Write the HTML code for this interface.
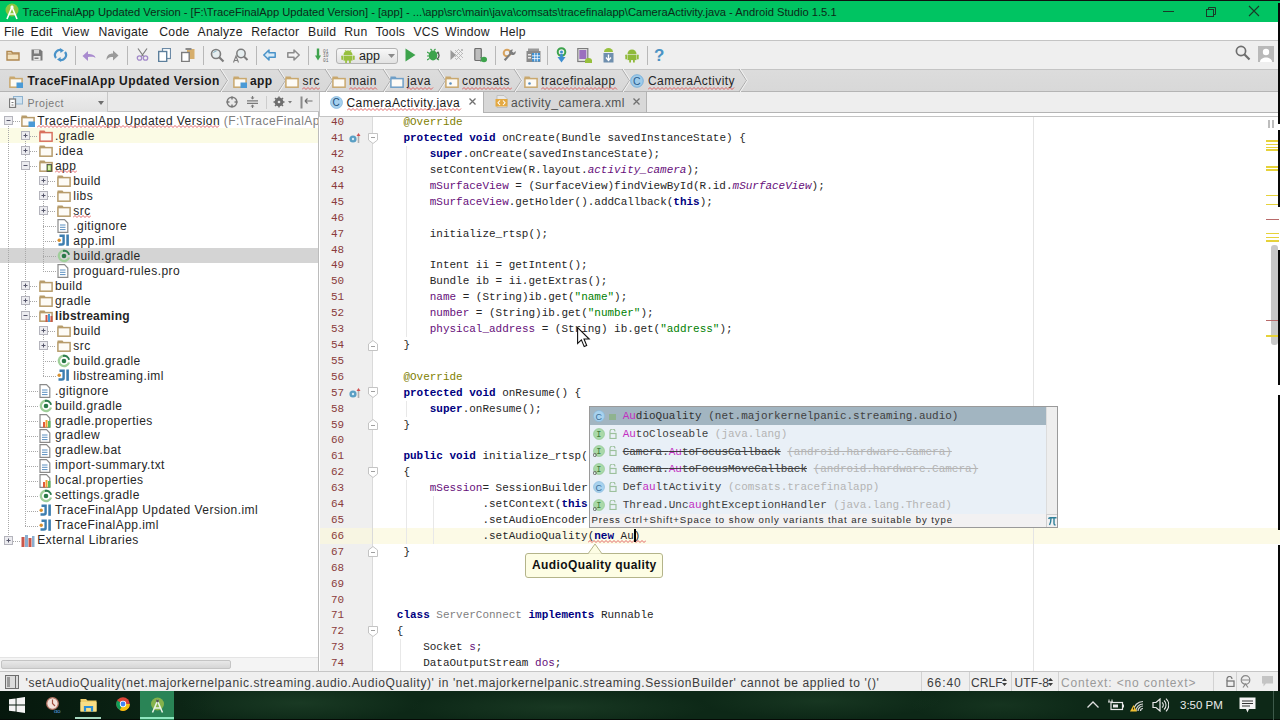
<!DOCTYPE html>
<html><head><meta charset="utf-8">
<style>
*{box-sizing:border-box}
html,body{margin:0;padding:0}
body{width:1280px;height:720px;overflow:hidden;position:relative;background:#fff;font-family:"Liberation Sans",sans-serif;color:#000}
.a{position:absolute}
.t{position:absolute;white-space:pre;line-height:1}
#title{left:0;top:0;width:1280px;height:22px;background:#00c462;border-top:1px solid #111}
#menu{left:0;top:22px;width:1280px;height:18.5px;background:#fff;border-bottom:1px solid #c4c4c4}
#tool{left:0;top:40.5px;width:1280px;height:29px;background:#efefef;border-bottom:1px solid #bdbdbd}
#crumb{left:0;top:69.3px;width:1280px;height:22.7px;background:linear-gradient(#dcdcdc,#d8d8d8);border-bottom:1px solid #b4b4b4;border-top:1px solid #c4c4c4}
#phead{left:0;top:92px;width:319px;height:20px;background:#eaeaea;border-bottom:1px solid #c4c4c4}
#tabs{left:319px;top:92px;width:961px;height:24px;background:#fff}
#tree{left:0;top:112px;width:319px;height:560px;background:#fff;border-right:1px solid #bcbcbc}
#editor{left:320px;top:116px;width:960px;height:556px;background:#fff;overflow:hidden}
#gutter{left:0;top:0;width:52.5px;height:556px;background:#f0f0f0;border-right:1px solid #dcdcdc}
#status{left:0;top:671px;width:1280px;height:20px;background:#efefef;border-top:1px solid #c6c6c6}
#task{left:0;top:691px;width:1280px;height:29px;background:linear-gradient(90deg,rgba(0,10,4,.55),rgba(0,10,4,0) 220px),radial-gradient(ellipse 120px 20px at 300px 12px,rgba(70,120,80,.22),transparent),radial-gradient(ellipse 150px 18px at 560px 16px,rgba(70,120,80,.2),transparent),radial-gradient(ellipse 120px 18px at 820px 10px,rgba(70,120,80,.18),transparent),radial-gradient(ellipse 90px 18px at 1000px 14px,rgba(70,120,80,.15),transparent),#0d2817;border-bottom:1.5px solid #050a06}
.code{font-family:"Liberation Mono",monospace;font-size:10.981px;line-height:15.9px;white-space:pre}
.ln{font-family:"Liberation Mono",monospace;font-size:10.981px;line-height:15.9px;color:#8a3b3b;white-space:pre}
.kw{color:#000080;font-weight:bold}
.an{color:#808000}
.fl{color:#660e7a}
.st{color:#008000}
.sf{color:#660e7a;font-style:italic}
.gr{color:#808080}
.hl{color:#c22fc2}
.tr{font-size:12px;letter-spacing:0.45px;color:#000}
</style></head><body>
<div id="title" class="a">
<svg class="a" style="left:4px;top:2px" width="16" height="17" viewBox="0 0 16 17"><circle cx="8" cy="7" r="6.5" fill="#a4c639" opacity=".85"/><path d="M3 16 L8 4 L13 16" stroke="#fff" stroke-width="1.6" fill="none"/><path d="M5 11 H11" stroke="#fff" stroke-width="1.3"/><circle cx="8" cy="4" r="1.6" fill="#fff"/></svg>
<div class="t" style="left:22.5px;top:5.50px;font-size:11.2px;color:#0c2a18">TraceFinalApp Updated Version - [F:\TraceFinalApp Updated Version] - [app] - ...\app\src\main\java\comsats\tracefinalapp\CameraActivity.java - Android Studio 1.5.1</div>
<div class="a" style="left:1163px;top:10px;width:11px;height:1px;background:#1a3a28"></div>
<svg class="a" style="left:1205px;top:5px" width="12" height="12" viewBox="0 0 12 12"><rect x="1.5" y="3.5" width="7" height="7" fill="none" stroke="#1a3a28"/><path d="M3.5 3.5 V1.5 H10.5 V8.5 H8.5" fill="none" stroke="#1a3a28"/></svg>
<svg class="a" style="left:1248px;top:4px" width="12" height="12" viewBox="0 0 12 12"><path d="M1 1 L11 11 M11 1 L1 11" stroke="#1a3a28" stroke-width="1.1"/></svg>
</div>
<div id="menu" class="a"><div class="t" style="left:3.9px;top:3.80px;font-size:12.2px;letter-spacing:0.25px;color:#1e1e1e">File</div><div class="t" style="left:30.6px;top:3.80px;font-size:12.2px;letter-spacing:0.25px;color:#1e1e1e">Edit</div><div class="t" style="left:62px;top:3.80px;font-size:12.2px;letter-spacing:0.25px;color:#1e1e1e">View</div><div class="t" style="left:98.5px;top:3.80px;font-size:12.2px;letter-spacing:0.25px;color:#1e1e1e">Navigate</div><div class="t" style="left:159.3px;top:3.80px;font-size:12.2px;letter-spacing:0.25px;color:#1e1e1e">Code</div><div class="t" style="left:197.6px;top:3.80px;font-size:12.2px;letter-spacing:0.25px;color:#1e1e1e">Analyze</div><div class="t" style="left:251.2px;top:3.80px;font-size:12.2px;letter-spacing:0.25px;color:#1e1e1e">Refactor</div><div class="t" style="left:308px;top:3.80px;font-size:12.2px;letter-spacing:0.25px;color:#1e1e1e">Build</div><div class="t" style="left:344.3px;top:3.80px;font-size:12.2px;letter-spacing:0.25px;color:#1e1e1e">Run</div><div class="t" style="left:375.5px;top:3.80px;font-size:12.2px;letter-spacing:0.25px;color:#1e1e1e">Tools</div><div class="t" style="left:413.4px;top:3.80px;font-size:12.2px;letter-spacing:0.25px;color:#1e1e1e">VCS</div><div class="t" style="left:445px;top:3.80px;font-size:12.2px;letter-spacing:0.25px;color:#1e1e1e">Window</div><div class="t" style="left:499.7px;top:3.80px;font-size:12.2px;letter-spacing:0.25px;color:#1e1e1e">Help</div></div>
<div id="tool" class="a"></div>
<svg class="a" style="left:6px;top:49px" width="14" height="12" viewBox="0 0 14 12"><path d="M1 2.5 H5.5 L6.5 4 H13 V11 H1 Z" fill="#f3e3c1" stroke="#b08850" stroke-width="1.4"/><path d="M1 5 H13" stroke="#b08850" stroke-width="1"/></svg>
<svg class="a" style="left:31px;top:49px" width="12" height="12" viewBox="0 0 12 12"><path d="M0.5 0.5 H9.5 L11.5 2.5 V11.5 H0.5 Z" fill="#7a7a7a"/><rect x="3" y="1" width="5" height="3.5" fill="#d8d8d8"/><rect x="2.5" y="7" width="7" height="4.5" fill="#e8e8e8"/><rect x="3.5" y="8.5" width="4" height="1.5" fill="#7a7a7a"/></svg>
<svg class="a" style="left:53px;top:48px" width="15" height="14" viewBox="0 0 15 14"><path d="M3 10 A5 5 0 0 1 8.5 2.2" fill="none" stroke="#4a93c9" stroke-width="2.2"/><path d="M12 4 A5 5 0 0 1 6.5 11.8" fill="none" stroke="#4a93c9" stroke-width="2.2"/><path d="M7 0 L11 2.5 L7.5 5 Z" fill="#4a93c9"/><path d="M8 14 L4 11.5 L7.5 9 Z" fill="#4a93c9"/></svg>
<div class="a" style="left:75px;top:46px;width:1px;height:19px;background:#b8b8b8"></div>
<svg class="a" style="left:82px;top:50px" width="14" height="12" viewBox="0 0 14 12"><path d="M0.5 6 L6 1 V4 C10 4 13 5 13.5 8 C12 6.5 9.5 6.5 6 7 V11 Z" fill="#a98bcf"/></svg>
<svg class="a" style="left:106px;top:50px" width="13" height="11" viewBox="0 0 13 11"><path d="M12.5 5.5 L7 0.5 V3.5 C3 3.5 0.5 5.5 0.5 10 C2 7.5 4 7 7 7 V10.5 Z" fill="#9a9a9a"/></svg>
<div class="a" style="left:127px;top:46px;width:1px;height:19px;background:#b8b8b8"></div>
<svg class="a" style="left:136px;top:48px" width="13" height="13" viewBox="0 0 13 13"><path d="M2 0.5 L8 9 M11 0.5 L5 9" stroke="#7d7d7d" stroke-width="1.2"/><circle cx="3.5" cy="10" r="2.2" fill="none" stroke="#a38ac9" stroke-width="1.3"/><circle cx="9.5" cy="10" r="2.2" fill="none" stroke="#a38ac9" stroke-width="1.3"/></svg>
<svg class="a" style="left:158px;top:48px" width="13" height="14" viewBox="0 0 13 14"><rect x="4.5" y="0.5" width="8" height="10" fill="#fff" stroke="#6c8aa6" stroke-width="1.2"/><rect x="0.7" y="3.5" width="8" height="10" fill="#fff" stroke="#5c7f9c" stroke-width="1.4"/></svg>
<svg class="a" style="left:181px;top:48px" width="14" height="14" viewBox="0 0 14 14"><rect x="6" y="1" width="7.5" height="10" fill="#d6ae6c"/><rect x="4.5" y="0" width="6" height="2" fill="#8a8a8a"/><rect x="0.7" y="4.5" width="7.5" height="9" fill="#fff" stroke="#7d7d7d" stroke-width="1.4"/></svg>
<div class="a" style="left:203px;top:46px;width:1px;height:19px;background:#b8b8b8"></div>
<svg class="a" style="left:210px;top:48px" width="15" height="15" viewBox="0 0 15 15"><circle cx="6" cy="6" r="4.5" fill="#e6eef0" stroke="#7d7d7d" stroke-width="1.6"/><path d="M9 9 L13.5 13.5" stroke="#7d7d7d" stroke-width="2.2"/><path d="M3.5 5 A3 3 0 0 1 6.5 3" stroke="#7fb0c0" stroke-width="1" fill="none"/></svg>
<svg class="a" style="left:233px;top:48px" width="16" height="15" viewBox="0 0 16 15"><circle cx="8" cy="5.5" r="4.2" fill="#e6eef0" stroke="#7d7d7d" stroke-width="1.5"/><path d="M11 8.5 L14.5 12" stroke="#7d7d7d" stroke-width="2"/><path d="M0.5 14.5 L3 8 L5.5 14.5 M1.5 12.5 H4.5" stroke="#7d7d7d" stroke-width="1.1" fill="none"/></svg>
<div class="a" style="left:256px;top:46px;width:1px;height:19px;background:#b8b8b8"></div>
<svg class="a" style="left:263px;top:49px" width="13" height="12" viewBox="0 0 13 12"><path d="M0.8 6 L6 1 V3.8 H12.2 V8.2 H6 V11 Z" fill="#d9ebf7" stroke="#4a93c9" stroke-width="1.5" stroke-linejoin="round"/></svg>
<svg class="a" style="left:287px;top:49px" width="13" height="12" viewBox="0 0 13 12"><path d="M12.2 6 L7 1 V3.8 H0.8 V8.2 H7 V11 Z" fill="#f4f4f4" stroke="#8c8c8c" stroke-width="1.5" stroke-linejoin="round"/></svg>
<div class="a" style="left:308px;top:46px;width:1px;height:19px;background:#b8b8b8"></div>
<svg class="a" style="left:315px;top:48px" width="15" height="15" viewBox="0 0 15 15"><path d="M3 0.5 V9" stroke="#3fa34d" stroke-width="2.4"/><path d="M0 7.5 L3 12.5 L6 7.5 Z" fill="#3fa34d"/><text x="8" y="4.5" font-size="4.6" fill="#6a6a6a" font-family="Liberation Mono">01</text><text x="8" y="9" font-size="4.6" fill="#6a6a6a" font-family="Liberation Mono">10</text><text x="8" y="13.5" font-size="4.6" fill="#6a6a6a" font-family="Liberation Mono">01</text></svg>
<div class="a" style="left:336px;top:47.5px;width:62px;height:16.5px;border:1px solid #b3b3b3;border-radius:3px;background:linear-gradient(#f8f8f8,#e2e2e2)"></div>
<svg class="a" style="left:341px;top:49px" width="14" height="14" viewBox="0 0 14 14"><path d="M2.5 6 A4.5 4.5 0 0 1 11.5 6 Z" fill="#97c03d"/><rect x="2.5" y="6.6" width="9" height="5" fill="#97c03d"/><rect x="0.3" y="6.5" width="1.7" height="4.5" rx=".8" fill="#97c03d"/><rect x="12" y="6.5" width="1.7" height="4.5" rx=".8" fill="#97c03d"/><rect x="4.2" y="11" width="1.7" height="3" fill="#97c03d"/><rect x="8.1" y="11" width="1.7" height="3" fill="#97c03d"/><path d="M4 1 L5 2.5 M10 1 L9 2.5" stroke="#97c03d" stroke-width=".8"/></svg>
<div class="t" style="left:359px;top:50.00px;font-size:12.5px;color:#222">app</div>
<svg class="a" style="left:388px;top:54px" width="7" height="4" viewBox="0 0 7 4"><path d="M0 0 H7 L3.5 4 Z" fill="#8a8a8a"/></svg>
<svg class="a" style="left:405px;top:48px" width="11" height="14" viewBox="0 0 11 14"><path d="M0.5 0.5 L10.5 7 L0.5 13.5 Z" fill="#3da34c"/></svg>
<svg class="a" style="left:427px;top:48px" width="14" height="14" viewBox="0 0 14 14"><ellipse cx="6" cy="7.5" rx="4.3" ry="5" fill="#3da34c"/><path d="M0 4 L2.5 5.5 M0 8 H2 M0 12 L2.5 10.5 M12 4 L9.5 5.5 M12 12 L9.5 10.5 M3.5 1 L5 2.5 M8.5 1 L7 2.5" stroke="#3da34c" stroke-width="1.2"/><path d="M10 4 A4 4 0 0 1 10 11" stroke="#555" stroke-width="1.3" fill="none"/></svg>
<svg class="a" style="left:450px;top:48px" width="14" height="14" viewBox="0 0 14 14"><path d="M0.5 2 L6 7 L0.5 12 Z" fill="#9a9a9a"/><path d="M5 2 L13 10 M8 1 L13 6 M5 6 L11 12 M5 10 L7 12 M11 1 L13 3 M13 1 L5 9 M13 5 L7 11 M9 1 L5 5" stroke="#b0b0b0" stroke-width=".8"/></svg>
<svg class="a" style="left:474px;top:48px" width="14" height="15" viewBox="0 0 14 15"><rect x="0.8" y="0.5" width="6.5" height="12" rx="1" fill="#bdbdbd" stroke="#6e6e6e" stroke-width="1.2"/><ellipse cx="10" cy="11.5" rx="3" ry="2.8" fill="#3da34c"/><path d="M6.5 9.5 L8 10.5 M6.5 13.5 L8 12.5" stroke="#3da34c" stroke-width="1"/></svg>
<div class="a" style="left:495px;top:46px;width:1px;height:19px;background:#b8b8b8"></div>
<svg class="a" style="left:502px;top:48px" width="15" height="15" viewBox="0 0 15 15"><circle cx="5" cy="5" r="3.3" fill="none" stroke="#d7a35f" stroke-width="2"/><path d="M13.5 3 A3 3 0 0 1 9 6.5 L3.5 13 L1.8 11.5 L7.5 5.5 A3 3 0 0 1 11 1.5 L10 3.5 L11.8 4.8 Z" fill="#7d7d7d"/></svg>
<svg class="a" style="left:526px;top:48px" width="15" height="15" viewBox="0 0 15 15"><rect x="2" y="0.5" width="11" height="3" fill="#9a9a9a"/><rect x="0.5" y="3" width="14" height="11" fill="#8a8a8a"/><rect x="6" y="5" width="8" height="8.5" fill="#3d8ed0"/><path d="M6 7.8 H14 M6 10.6 H14 M8.7 5 V13.5 M11.3 5 V13.5" stroke="#fff" stroke-width=".8"/><rect x="2" y="6" width="3" height="1.5" fill="#e8e8e8"/><rect x="2" y="9" width="3" height="1.5" fill="#e8e8e8"/></svg>
<div class="a" style="left:547px;top:46px;width:1px;height:19px;background:#b8b8b8"></div>
<svg class="a" style="left:556px;top:47px" width="11" height="16" viewBox="0 0 11 16"><circle cx="5.5" cy="5" r="3.8" fill="none" stroke="#3da34c" stroke-width="2"/><circle cx="5.5" cy="5" r="1.5" fill="#3d8ed0"/><path d="M5.5 7 V12" stroke="#3d8ed0" stroke-width="2.6"/><path d="M1.5 10 L5.5 15.5 L9.5 10 Z" fill="#3d8ed0"/></svg>
<svg class="a" style="left:577px;top:48px" width="16" height="15" viewBox="0 0 16 15"><rect x="0.8" y="0.5" width="10" height="13" fill="#e4e4e4" stroke="#7d7d7d" stroke-width="1.2"/><rect x="2.3" y="2" width="7" height="9" fill="#9b6fbf"/><path d="M8 13 A3.5 3 0 0 1 15 13 Z" fill="#97c03d"/><rect x="8" y="12" width="7" height="3" fill="#97c03d"/></svg>
<svg class="a" style="left:603px;top:48px" width="11" height="15" viewBox="0 0 11 15"><path d="M1 4 A4.5 4 0 0 1 10 4 Z" fill="#97c03d"/><rect x="0.5" y="5" width="10" height="9.5" fill="#6f8fae"/><path d="M5.5 6.5 V12 M3 9.5 L5.5 12.5 L8 9.5" stroke="#fff" stroke-width="1.3" fill="none"/></svg>
<svg class="a" style="left:625px;top:48px" width="14" height="15" viewBox="0 0 14 15"><path d="M2.5 6 A4.5 4.5 0 0 1 11.5 6 Z" fill="#8fba3a"/><rect x="2.5" y="6.6" width="9" height="5.5" fill="#8fba3a"/><rect x="0.3" y="6.5" width="1.7" height="5" rx=".8" fill="#8fba3a"/><rect x="12" y="6.5" width="1.7" height="5" rx=".8" fill="#8fba3a"/><rect x="4.2" y="11" width="1.8" height="3.5" fill="#8fba3a"/><rect x="8" y="11" width="1.8" height="3.5" fill="#8fba3a"/></svg>
<div class="a" style="left:647px;top:46px;width:1px;height:19px;background:#b8b8b8"></div>
<div class="t" style="left:654px;top:46.50px;font-size:17px;font-weight:bold;color:#4b93c4">?</div>
<svg class="a" style="left:1235px;top:45px" width="16" height="16" viewBox="0 0 16 16"><circle cx="6" cy="6" r="4.6" fill="none" stroke="#6e6e6e" stroke-width="1.7"/><path d="M9.3 9.3 L14.5 14.5" stroke="#6e6e6e" stroke-width="2.2"/></svg>
<svg class="a" style="left:1258px;top:46px" width="16" height="16" viewBox="0 0 16 16"><rect x="0" y="0" width="16" height="16" fill="#b9b9b9"/><circle cx="8" cy="6" r="3.2" fill="#fff"/><path d="M2 16 C2 10 14 10 14 16 Z" fill="#fff"/></svg>
<div id="crumb" class="a"></div>
<svg class="a" style="left:9px;top:75.5px" width="14" height="12" viewBox="0 0 14 12"><path d="M0.5 0.5 H5.5 L6.5 2 H0.5 Z" fill="#c9a86e"/><rect x="0.9" y="2.6" width="12.2" height="8.6" fill="#fdfbf6" stroke="#c9a86e" stroke-width="1.5"/><rect x="7.5" y="6.5" width="6.5" height="5.5" fill="#4a9ad6"/></svg>
<div class="t" style="left:27.5px;top:75.30px;font-size:12px;letter-spacing:0.4px;color:#1a1a1a;font-weight:bold">TraceFinalApp Updated Version</div>
<svg class="a" style="left:219px;top:69px" width="10" height="23" viewBox="0 0 10 23"><path d="M1 0 L8.5 11.5 L1 23" fill="none" stroke="#ababab" stroke-width="1"/><path d="M2.2 0 L9.5 11.5 L2.2 23" fill="none" stroke="#f2f2f2" stroke-width="1"/></svg>
<svg class="a" style="left:233px;top:75.5px" width="14" height="12" viewBox="0 0 14 12"><path d="M0.5 0.5 H5.5 L6.5 2 H0.5 Z" fill="#c9a86e"/><rect x="0.9" y="2.6" width="12.2" height="8.6" fill="#fdfbf6" stroke="#c9a86e" stroke-width="1.5"/><rect x="7.5" y="6.5" width="6.5" height="5.5" fill="#4a9ad6"/></svg>
<div class="t" style="left:250px;top:75.30px;font-size:12px;letter-spacing:0.4px;color:#1a1a1a;font-weight:bold">app</div>
<svg class="a" style="left:277px;top:69px" width="10" height="23" viewBox="0 0 10 23"><path d="M1 0 L8.5 11.5 L1 23" fill="none" stroke="#ababab" stroke-width="1"/><path d="M2.2 0 L9.5 11.5 L2.2 23" fill="none" stroke="#f2f2f2" stroke-width="1"/></svg>
<svg class="a" style="left:285px;top:75.5px" width="14" height="12" viewBox="0 0 14 12"><path d="M0.5 0.5 H5.5 L6.5 2 H0.5 Z" fill="#c9a86e"/><rect x="0.9" y="2.6" width="12.2" height="8.6" fill="#fdfbf6" stroke="#c9a86e" stroke-width="1.5"/></svg>
<div class="t" style="left:302.5px;top:75.30px;font-size:12px;letter-spacing:0.45px;color:#262626;">src</div>
<svg class="a" style="left:302.0px;top:86.5px" width="18" height="3" viewBox="0 0 18 3"><polyline points="0,2.5 2,0.5 4,2.5 6,0.5 8,2.5 10,0.5 12,2.5 14,0.5 16,2.5 18,0.5" fill="none" stroke="#e05858" stroke-width="0.9"/></svg>
<svg class="a" style="left:324px;top:69px" width="10" height="23" viewBox="0 0 10 23"><path d="M1 0 L8.5 11.5 L1 23" fill="none" stroke="#ababab" stroke-width="1"/><path d="M2.2 0 L9.5 11.5 L2.2 23" fill="none" stroke="#f2f2f2" stroke-width="1"/></svg>
<svg class="a" style="left:332px;top:75.5px" width="14" height="12" viewBox="0 0 14 12"><path d="M0.5 0.5 H5.5 L6.5 2 H0.5 Z" fill="#c9a86e"/><rect x="0.9" y="2.6" width="12.2" height="8.6" fill="#fdfbf6" stroke="#c9a86e" stroke-width="1.5"/></svg>
<div class="t" style="left:349px;top:75.30px;font-size:12px;letter-spacing:0.45px;color:#262626;">main</div>
<svg class="a" style="left:349.0px;top:86.5px" width="29" height="3" viewBox="0 0 29 3"><polyline points="0,2.5 2,0.5 4,2.5 6,0.5 8,2.5 10,0.5 12,2.5 14,0.5 16,2.5 18,0.5 20,2.5 22,0.5 24,2.5 26,0.5 28,2.5" fill="none" stroke="#e05858" stroke-width="0.9"/></svg>
<svg class="a" style="left:382px;top:69px" width="10" height="23" viewBox="0 0 10 23"><path d="M1 0 L8.5 11.5 L1 23" fill="none" stroke="#ababab" stroke-width="1"/><path d="M2.2 0 L9.5 11.5 L2.2 23" fill="none" stroke="#f2f2f2" stroke-width="1"/></svg>
<svg class="a" style="left:390px;top:75.5px" width="14" height="12" viewBox="0 0 14 12"><path d="M0.5 0.5 H5.5 L6.5 2 H0.5 Z" fill="#6f9fc7"/><rect x="0.9" y="2.6" width="12.2" height="8.6" fill="#fdfbf6" stroke="#6f9fc7" stroke-width="1.5"/></svg>
<div class="t" style="left:407px;top:75.30px;font-size:12px;letter-spacing:0.45px;color:#262626;">java</div>
<svg class="a" style="left:407.0px;top:86.5px" width="27" height="3" viewBox="0 0 27 3"><polyline points="0,2.5 2,0.5 4,2.5 6,0.5 8,2.5 10,0.5 12,2.5 14,0.5 16,2.5 18,0.5 20,2.5 22,0.5 24,2.5 26,0.5" fill="none" stroke="#e05858" stroke-width="0.9"/></svg>
<svg class="a" style="left:437px;top:69px" width="10" height="23" viewBox="0 0 10 23"><path d="M1 0 L8.5 11.5 L1 23" fill="none" stroke="#ababab" stroke-width="1"/><path d="M2.2 0 L9.5 11.5 L2.2 23" fill="none" stroke="#f2f2f2" stroke-width="1"/></svg>
<svg class="a" style="left:445px;top:75.5px" width="14" height="12" viewBox="0 0 14 12"><path d="M0.5 0.5 H5.5 L6.5 2 H0.5 Z" fill="#c9a86e"/><rect x="0.9" y="2.6" width="12.2" height="8.6" fill="#fdfbf6" stroke="#c9a86e" stroke-width="1.5"/><circle cx="5.5" cy="7.5" r="1.3" fill="#5a8fc0"/></svg>
<div class="t" style="left:462px;top:75.30px;font-size:12px;letter-spacing:0.45px;color:#262626;">comsats</div>
<svg class="a" style="left:462.0px;top:86.5px" width="50" height="3" viewBox="0 0 50 3"><polyline points="0,2.5 2,0.5 4,2.5 6,0.5 8,2.5 10,0.5 12,2.5 14,0.5 16,2.5 18,0.5 20,2.5 22,0.5 24,2.5 26,0.5 28,2.5 30,0.5 32,2.5 34,0.5 36,2.5 38,0.5 40,2.5 42,0.5 44,2.5 46,0.5 48,2.5 50,0.5" fill="none" stroke="#e05858" stroke-width="0.9"/></svg>
<svg class="a" style="left:513px;top:69px" width="10" height="23" viewBox="0 0 10 23"><path d="M1 0 L8.5 11.5 L1 23" fill="none" stroke="#ababab" stroke-width="1"/><path d="M2.2 0 L9.5 11.5 L2.2 23" fill="none" stroke="#f2f2f2" stroke-width="1"/></svg>
<svg class="a" style="left:524px;top:75.5px" width="14" height="12" viewBox="0 0 14 12"><path d="M0.5 0.5 H5.5 L6.5 2 H0.5 Z" fill="#c9a86e"/><rect x="0.9" y="2.6" width="12.2" height="8.6" fill="#fdfbf6" stroke="#c9a86e" stroke-width="1.5"/><circle cx="5.5" cy="7.5" r="1.3" fill="#5a8fc0"/></svg>
<div class="t" style="left:541px;top:75.30px;font-size:12px;letter-spacing:0.45px;color:#262626;">tracefinalapp</div>
<svg class="a" style="left:541.0px;top:86.5px" width="77" height="3" viewBox="0 0 77 3"><polyline points="0,2.5 2,0.5 4,2.5 6,0.5 8,2.5 10,0.5 12,2.5 14,0.5 16,2.5 18,0.5 20,2.5 22,0.5 24,2.5 26,0.5 28,2.5 30,0.5 32,2.5 34,0.5 36,2.5 38,0.5 40,2.5 42,0.5 44,2.5 46,0.5 48,2.5 50,0.5 52,2.5 54,0.5 56,2.5 58,0.5 60,2.5 62,0.5 64,2.5 66,0.5 68,2.5 70,0.5 72,2.5 74,0.5 76,2.5" fill="none" stroke="#e05858" stroke-width="0.9"/></svg>
<svg class="a" style="left:621px;top:69px" width="10" height="23" viewBox="0 0 10 23"><path d="M1 0 L8.5 11.5 L1 23" fill="none" stroke="#ababab" stroke-width="1"/><path d="M2.2 0 L9.5 11.5 L2.2 23" fill="none" stroke="#f2f2f2" stroke-width="1"/></svg>
<svg class="a" style="left:630px;top:74px" width="14" height="14" viewBox="0 0 14 14"><circle cx="7" cy="7" r="6.3" fill="#9fcbe9" stroke="#6aa8d8" stroke-width=".8"/><text x="2.9" y="10.8" font-size="10.5" fill="#2a5f8f" font-family="Liberation Sans">C</text></svg>
<div class="t" style="left:648px;top:75.30px;font-size:12px;letter-spacing:0.45px;color:#262626;">CameraActivity</div>
<svg class="a" style="left:648.0px;top:86.5px" width="87" height="3" viewBox="0 0 87 3"><polyline points="0,2.5 2,0.5 4,2.5 6,0.5 8,2.5 10,0.5 12,2.5 14,0.5 16,2.5 18,0.5 20,2.5 22,0.5 24,2.5 26,0.5 28,2.5 30,0.5 32,2.5 34,0.5 36,2.5 38,0.5 40,2.5 42,0.5 44,2.5 46,0.5 48,2.5 50,0.5 52,2.5 54,0.5 56,2.5 58,0.5 60,2.5 62,0.5 64,2.5 66,0.5 68,2.5 70,0.5 72,2.5 74,0.5 76,2.5 78,0.5 80,2.5 82,0.5 84,2.5 86,0.5" fill="none" stroke="#e05858" stroke-width="0.9"/></svg>
<svg class="a" style="left:738px;top:69px" width="10" height="23" viewBox="0 0 10 23"><path d="M1 0 L8.5 11.5 L1 23" fill="none" stroke="#ababab" stroke-width="1"/><path d="M2.2 0 L9.5 11.5 L2.2 23" fill="none" stroke="#f2f2f2" stroke-width="1"/></svg>
<div id="phead" class="a"></div>
<div class="a" style="left:0;top:92px;width:107.5px;height:20px;background:linear-gradient(#ededed,#e1e1e1);border-right:1px solid #c8c8c8"></div>
<svg class="a" style="left:9px;top:96px" width="14" height="12" viewBox="0 0 14 12"><rect x="4.5" y="0.5" width="9" height="7.5" fill="#cfe2f0" stroke="#8fb3cf" stroke-width="1"/><rect x="0.5" y="3" width="6" height="8.5" fill="#fff" stroke="#7a7a7a" stroke-width="1.3"/><path d="M2.5 6.5 H4.5 M2.5 9 H4.5" stroke="#7a7a7a" stroke-width="1"/></svg>
<div class="t" style="left:27.5px;top:97.60px;font-size:10.6px;letter-spacing:0.5px;color:#7a7a7a">Project</div>
<svg class="a" style="left:98px;top:101px" width="6" height="4" viewBox="0 0 6 4"><path d="M0 0 H6 L3 4 Z" fill="#6e6e6e"/></svg>
<svg class="a" style="left:226px;top:96px" width="12" height="12" viewBox="0 0 12 12"><circle cx="6" cy="6" r="4.8" fill="none" stroke="#7a7a7a" stroke-width="1.5"/><path d="M6 0.5 V3.5 M6 8.5 V11.5 M0.5 6 H3.5 M8.5 6 H11.5" stroke="#7a7a7a" stroke-width="1.5"/></svg>
<svg class="a" style="left:247px;top:96px" width="11" height="12" viewBox="0 0 11 12"><path d="M0 4.8 H11 M0 7.4 H11" stroke="#7a7a7a" stroke-width="1.2"/><path d="M5.5 0 V3" stroke="#7a7a7a" stroke-width="1.2"/><path d="M3.5 1.6 L5.5 3.6 L7.5 1.6 Z" fill="#7a7a7a"/><path d="M5.5 12 V9" stroke="#7a7a7a" stroke-width="1.2"/><path d="M3.5 10.5 L5.5 8.5 L7.5 10.5 Z" fill="#7a7a7a"/></svg>
<div class="a" style="left:266px;top:96px;width:1px;height:13px;background:#cdcdcd"></div>
<svg class="a" style="left:273px;top:96px" width="20" height="12" viewBox="0 0 20 12"><circle cx="6" cy="6" r="3.2" fill="none" stroke="#6e6e6e" stroke-width="2.4"/><path d="M6 0.5 V11.5 M0.5 6 H11.5 M2 2 L10 10 M10 2 L2 10" stroke="#6e6e6e" stroke-width="1.5"/><circle cx="6" cy="6" r="1.3" fill="#e8e8e8"/><path d="M15 5 H19 L17 7.5 Z" fill="#7a7a7a"/></svg>
<svg class="a" style="left:300px;top:96px" width="13" height="13" viewBox="0 0 13 13"><rect x="0.5" y="0.5" width="2" height="12" fill="#8a8a8a"/><path d="M5 5 H12.5 M5 5 L7.5 2.5 M5 5 L7.5 7.5" stroke="#6e6e6e" stroke-width="1.2" fill="none"/></svg>
<div id="tabs" class="a"></div>
<div class="a" style="left:319px;top:92px;width:961px;height:20.5px;background:#eeeeee;border-bottom:1px solid #b4b4b4"></div>
<div class="a" style="left:319px;top:92px;width:164px;height:24px;background:#fff;border-left:1px solid #c4c4c4"></div>
<svg class="a" style="left:329.5px;top:95.5px" width="13" height="13" viewBox="0 0 13 13"><circle cx="6.5" cy="6.5" r="6" fill="#a6d0ee" stroke="#7fb4dc" stroke-width=".7"/><text x="2.6" y="10.3" font-size="10" fill="#234f7a" font-family="Liberation Sans">C</text></svg>
<div class="t" style="left:346.5px;top:97.00px;font-size:12px;letter-spacing:0.45px;color:#1a1a1a">CameraActivity.java</div>
<svg class="a" style="left:346.5px;top:107.5px" width="115" height="3" viewBox="0 0 115 3"><polyline points="0,2.5 2,0.5 4,2.5 6,0.5 8,2.5 10,0.5 12,2.5 14,0.5 16,2.5 18,0.5 20,2.5 22,0.5 24,2.5 26,0.5 28,2.5 30,0.5 32,2.5 34,0.5 36,2.5 38,0.5 40,2.5 42,0.5 44,2.5 46,0.5 48,2.5 50,0.5 52,2.5 54,0.5 56,2.5 58,0.5 60,2.5 62,0.5 64,2.5 66,0.5 68,2.5 70,0.5 72,2.5 74,0.5 76,2.5 78,0.5 80,2.5 82,0.5 84,2.5 86,0.5 88,2.5 90,0.5 92,2.5 94,0.5 96,2.5 98,0.5 100,2.5 102,0.5 104,2.5 106,0.5 108,2.5 110,0.5 112,2.5 114,0.5" fill="none" stroke="#e05858" stroke-width="0.9"/></svg>
<svg class="a" style="left:469px;top:98px" width="7" height="7" viewBox="0 0 7 7"><path d="M0.5 0.5 L6.5 6.5 M6.5 0.5 L0.5 6.5" stroke="#707070" stroke-width="1.3"/></svg>
<div class="a" style="left:483px;top:92px;width:164px;height:20.5px;background:#d8d8d8;border:1px solid #b3b3b3;border-top:none"></div>
<svg class="a" style="left:494.5px;top:95px" width="13" height="13" viewBox="0 0 13 13"><path d="M2 0.5 H9 L12 3.5 V12.5 H2 Z" fill="#e8e8e8" stroke="#b8b8b8" stroke-width=".8"/><rect x="0.5" y="4" width="12" height="7.5" fill="#e4a941"/><path d="M5 5.5 L3 7.75 L5 10 M8 5.5 L10 7.75 L8 10" stroke="#fff" stroke-width="1.1" fill="none"/></svg>
<div class="t" style="left:511px;top:97.00px;font-size:12px;letter-spacing:0.45px;color:#505050">activity_camera.xml</div>
<svg class="a" style="left:633px;top:98px" width="7" height="7" viewBox="0 0 7 7"><path d="M0.5 0.5 L6.5 6.5 M6.5 0.5 L0.5 6.5" stroke="#707070" stroke-width="1.3"/></svg>
<div id="tree" class="a"></div>
<div class="a" style="left:0;top:112px;width:318px;height:560px;overflow:hidden">
<div class="a" style="left:0;top:-112px;width:318px;height:720px">
<div class="a" style="left:0;top:128.39px;width:318px;height:15px;background:#fbfbe5"></div>
<div class="a" style="left:0;top:248.31px;width:318px;height:15px;background:#d4d4d4"></div>
<div class="a" style="left:8px;top:125.9px;width:1px;height:409.7px;background:repeating-linear-gradient(180deg,#a8a8a8 0 1px,transparent 1px 2px)"></div>
<div class="a" style="left:25px;top:170.9px;width:1px;height:354.8px;background:repeating-linear-gradient(180deg,#a8a8a8 0 1px,transparent 1px 2px)"></div>
<div class="a" style="left:43px;top:180.9px;width:1px;height:89.9px;background:repeating-linear-gradient(180deg,#a8a8a8 0 1px,transparent 1px 2px)"></div>
<div class="a" style="left:43px;top:330.8px;width:1px;height:45.0px;background:repeating-linear-gradient(180deg,#a8a8a8 0 1px,transparent 1px 2px)"></div>
<div class="a" style="left:25px;top:130.9px;width:1px;height:30.0px;background:repeating-linear-gradient(180deg,#a8a8a8 0 1px,transparent 1px 2px)"></div>
<div class="a" style="left:12.5px;top:120.9px;width:7.5px;height:1px;background:repeating-linear-gradient(90deg,#a8a8a8 0 1px,transparent 1px 2px)"></div>
<svg class="a" style="left:4.0px;top:116.4px" width="9" height="9" viewBox="0 0 9 9"><rect x="0.5" y="0.5" width="8" height="8" fill="#ececf0" stroke="#b4b4bc" stroke-width="1"/><path d="M2.5 4.5 H6.5" stroke="#56566a" stroke-width="1"/></svg>
<svg class="a" style="left:21px;top:114.9px" width="14" height="12" viewBox="0 0 14 12"><path d="M0.5 0.5 H5.5 L6.5 2 H0.5 Z" fill="#b79c6b"/><rect x="0.9" y="2.6" width="12.2" height="8.6" fill="#fdfbf6" stroke="#b79c6b" stroke-width="1.5"/><rect x="7.5" y="6.5" width="6.5" height="5.5" fill="#4a9ad6"/></svg>
<div class="t" style="left:37.3px;top:114.70px;font-size:12px;letter-spacing:0.45px;color:#262626;">TraceFinalApp Updated Version<span style="color:#808080"> (F:\TraceFinalApp Updated Version)</span></div>
<svg class="a" style="left:37.3px;top:125.4px" width="183" height="3" viewBox="0 0 183 3"><polyline points="0,2.5 2,0.5 4,2.5 6,0.5 8,2.5 10,0.5 12,2.5 14,0.5 16,2.5 18,0.5 20,2.5 22,0.5 24,2.5 26,0.5 28,2.5 30,0.5 32,2.5 34,0.5 36,2.5 38,0.5 40,2.5 42,0.5 44,2.5 46,0.5 48,2.5 50,0.5 52,2.5 54,0.5 56,2.5 58,0.5 60,2.5 62,0.5 64,2.5 66,0.5 68,2.5 70,0.5 72,2.5 74,0.5 76,2.5 78,0.5 80,2.5 82,0.5 84,2.5 86,0.5 88,2.5 90,0.5 92,2.5 94,0.5 96,2.5 98,0.5 100,2.5 102,0.5 104,2.5 106,0.5 108,2.5 110,0.5 112,2.5 114,0.5 116,2.5 118,0.5 120,2.5 122,0.5 124,2.5 126,0.5 128,2.5 130,0.5 132,2.5 134,0.5 136,2.5 138,0.5 140,2.5 142,0.5 144,2.5 146,0.5 148,2.5 150,0.5 152,2.5 154,0.5 156,2.5 158,0.5 160,2.5 162,0.5 164,2.5 166,0.5 168,2.5 170,0.5 172,2.5 174,0.5 176,2.5 178,0.5 180,2.5 182,0.5" fill="none" stroke="#e05858" stroke-width="0.9"/></svg>
<div class="a" style="left:29.5px;top:135.9px;width:8.0px;height:1px;background:repeating-linear-gradient(90deg,#a8a8a8 0 1px,transparent 1px 2px)"></div>
<svg class="a" style="left:21.0px;top:131.39000000000001px" width="9" height="9" viewBox="0 0 9 9"><rect x="0.5" y="0.5" width="8" height="8" fill="#ececf0" stroke="#b4b4bc" stroke-width="1"/><path d="M2.5 4.5 H6.5" stroke="#56566a" stroke-width="1"/><path d="M4.5 2.5 V6.5" stroke="#56566a" stroke-width="1"/></svg>
<svg class="a" style="left:38.5px;top:129.89000000000001px" width="14" height="12" viewBox="0 0 14 12"><path d="M0.5 0.5 H5.5 L6.5 2 H0.5 Z" fill="#d8705e"/><rect x="0.9" y="2.6" width="12.2" height="8.6" fill="#fdfbf6" stroke="#d8705e" stroke-width="1.5"/></svg>
<div class="t" style="left:55px;top:129.69px;font-size:12px;letter-spacing:0.45px;color:#262626;">.gradle</div>
<div class="a" style="left:29.5px;top:150.9px;width:8.0px;height:1px;background:repeating-linear-gradient(90deg,#a8a8a8 0 1px,transparent 1px 2px)"></div>
<svg class="a" style="left:21.0px;top:146.38px" width="9" height="9" viewBox="0 0 9 9"><rect x="0.5" y="0.5" width="8" height="8" fill="#ececf0" stroke="#b4b4bc" stroke-width="1"/><path d="M2.5 4.5 H6.5" stroke="#56566a" stroke-width="1"/><path d="M4.5 2.5 V6.5" stroke="#56566a" stroke-width="1"/></svg>
<svg class="a" style="left:38.5px;top:144.88px" width="14" height="12" viewBox="0 0 14 12"><path d="M0.5 0.5 H5.5 L6.5 2 H0.5 Z" fill="#b79c6b"/><rect x="0.9" y="2.6" width="12.2" height="8.6" fill="#fdfbf6" stroke="#b79c6b" stroke-width="1.5"/></svg>
<div class="t" style="left:55px;top:144.68px;font-size:12px;letter-spacing:0.45px;color:#262626;">.idea</div>
<div class="a" style="left:29.5px;top:165.9px;width:8.0px;height:1px;background:repeating-linear-gradient(90deg,#a8a8a8 0 1px,transparent 1px 2px)"></div>
<svg class="a" style="left:21.0px;top:161.37px" width="9" height="9" viewBox="0 0 9 9"><rect x="0.5" y="0.5" width="8" height="8" fill="#ececf0" stroke="#b4b4bc" stroke-width="1"/><path d="M2.5 4.5 H6.5" stroke="#56566a" stroke-width="1"/></svg>
<svg class="a" style="left:38.5px;top:159.87px" width="14" height="12" viewBox="0 0 14 12"><path d="M0.5 0.5 H5.5 L6.5 2 H0.5 Z" fill="#b79c6b"/><rect x="0.9" y="2.6" width="12.2" height="8.6" fill="#fdfbf6" stroke="#b79c6b" stroke-width="1.5"/><rect x="8" y="4.5" width="4.5" height="7" fill="#7fae3a" stroke="#444" stroke-width=".8"/><rect x="9" y="5.5" width="2.5" height="4.5" fill="#d9f0b0"/></svg>
<div class="t" style="left:55px;top:159.67px;font-size:12px;letter-spacing:0.45px;color:#262626;">app</div>
<svg class="a" style="left:55.0px;top:170.4px" width="22" height="3" viewBox="0 0 22 3"><polyline points="0,2.5 2,0.5 4,2.5 6,0.5 8,2.5 10,0.5 12,2.5 14,0.5 16,2.5 18,0.5 20,2.5 22,0.5" fill="none" stroke="#e05858" stroke-width="0.9"/></svg>
<div class="a" style="left:47.5px;top:180.9px;width:8.0px;height:1px;background:repeating-linear-gradient(90deg,#a8a8a8 0 1px,transparent 1px 2px)"></div>
<svg class="a" style="left:39.0px;top:176.36px" width="9" height="9" viewBox="0 0 9 9"><rect x="0.5" y="0.5" width="8" height="8" fill="#ececf0" stroke="#b4b4bc" stroke-width="1"/><path d="M2.5 4.5 H6.5" stroke="#56566a" stroke-width="1"/><path d="M4.5 2.5 V6.5" stroke="#56566a" stroke-width="1"/></svg>
<svg class="a" style="left:56.5px;top:174.86px" width="14" height="12" viewBox="0 0 14 12"><path d="M0.5 0.5 H5.5 L6.5 2 H0.5 Z" fill="#b79c6b"/><rect x="0.9" y="2.6" width="12.2" height="8.6" fill="#fdfbf6" stroke="#b79c6b" stroke-width="1.5"/></svg>
<div class="t" style="left:73.3px;top:174.66px;font-size:12px;letter-spacing:0.45px;color:#262626;">build</div>
<div class="a" style="left:47.5px;top:195.9px;width:8.0px;height:1px;background:repeating-linear-gradient(90deg,#a8a8a8 0 1px,transparent 1px 2px)"></div>
<svg class="a" style="left:39.0px;top:191.35000000000002px" width="9" height="9" viewBox="0 0 9 9"><rect x="0.5" y="0.5" width="8" height="8" fill="#ececf0" stroke="#b4b4bc" stroke-width="1"/><path d="M2.5 4.5 H6.5" stroke="#56566a" stroke-width="1"/><path d="M4.5 2.5 V6.5" stroke="#56566a" stroke-width="1"/></svg>
<svg class="a" style="left:56.5px;top:189.85000000000002px" width="14" height="12" viewBox="0 0 14 12"><path d="M0.5 0.5 H5.5 L6.5 2 H0.5 Z" fill="#b79c6b"/><rect x="0.9" y="2.6" width="12.2" height="8.6" fill="#fdfbf6" stroke="#b79c6b" stroke-width="1.5"/></svg>
<div class="t" style="left:73.3px;top:189.65px;font-size:12px;letter-spacing:0.45px;color:#262626;">libs</div>
<div class="a" style="left:47.5px;top:210.8px;width:8.0px;height:1px;background:repeating-linear-gradient(90deg,#a8a8a8 0 1px,transparent 1px 2px)"></div>
<svg class="a" style="left:39.0px;top:206.34px" width="9" height="9" viewBox="0 0 9 9"><rect x="0.5" y="0.5" width="8" height="8" fill="#ececf0" stroke="#b4b4bc" stroke-width="1"/><path d="M2.5 4.5 H6.5" stroke="#56566a" stroke-width="1"/><path d="M4.5 2.5 V6.5" stroke="#56566a" stroke-width="1"/></svg>
<svg class="a" style="left:56.5px;top:204.84px" width="14" height="12" viewBox="0 0 14 12"><path d="M0.5 0.5 H5.5 L6.5 2 H0.5 Z" fill="#b79c6b"/><rect x="0.9" y="2.6" width="12.2" height="8.6" fill="#fdfbf6" stroke="#b79c6b" stroke-width="1.5"/></svg>
<div class="t" style="left:73.3px;top:204.64px;font-size:12px;letter-spacing:0.45px;color:#262626;">src</div>
<svg class="a" style="left:73.3px;top:215.3px" width="18" height="3" viewBox="0 0 18 3"><polyline points="0,2.5 2,0.5 4,2.5 6,0.5 8,2.5 10,0.5 12,2.5 14,0.5 16,2.5 18,0.5" fill="none" stroke="#e05858" stroke-width="0.9"/></svg>
<div class="a" style="left:43.0px;top:225.8px;width:12.5px;height:1px;background:repeating-linear-gradient(90deg,#a8a8a8 0 1px,transparent 1px 2px)"></div>
<svg class="a" style="left:57.0px;top:218.83px" width="12" height="14" viewBox="0 0 12 14"><path d="M1 0.7 H7.5 L10.8 4 V13.3 H1 Z" fill="#fff" stroke="#8a8a8a" stroke-width="1.2"/><path d="M3 6 H8.5 M3 8.3 H8.5 M3 10.6 H8.5" stroke="#5a8fc0" stroke-width="1"/></svg>
<div class="t" style="left:73.3px;top:219.63px;font-size:12px;letter-spacing:0.45px;color:#262626;">.gitignore</div>
<div class="a" style="left:43.0px;top:240.8px;width:12.5px;height:1px;background:repeating-linear-gradient(90deg,#a8a8a8 0 1px,transparent 1px 2px)"></div>
<svg class="a" style="left:56.5px;top:234.32px" width="13" height="13" viewBox="0 0 13 13"><path d="M2.5 0.5 H7.8 V8.5 A3 3 0 0 1 4.8 11.8 H1.5 V9.3 H4.5 A0.9 0.9 0 0 0 5.4 8.4 V3 H2.5 Z" fill="#3d7eb0"/><rect x="9.3" y="0.5" width="2.6" height="11.3" fill="#3d7eb0"/><circle cx="2.2" cy="6.2" r="1.7" fill="#d8902e"/></svg>
<div class="t" style="left:73.3px;top:234.62px;font-size:12px;letter-spacing:0.45px;color:#262626;">app.iml</div>
<div class="a" style="left:43.0px;top:255.8px;width:12.5px;height:1px;background:repeating-linear-gradient(90deg,#a8a8a8 0 1px,transparent 1px 2px)"></div>
<svg class="a" style="left:56.5px;top:248.81px" width="14" height="14" viewBox="0 0 14 14"><path d="M12 8.5 A5.2 5.2 0 1 1 10.5 3" fill="none" stroke="#9fcf9a" stroke-width="2.3"/><path d="M6 1.9 A5.2 5.2 0 0 1 12.1 5.8" fill="none" stroke="#2f7d50" stroke-width="2"/><circle cx="7" cy="7" r="2.3" fill="#2a7a48"/></svg>
<div class="t" style="left:73.3px;top:249.61px;font-size:12px;letter-spacing:0.45px;color:#262626;">build.gradle</div>
<div class="a" style="left:43.0px;top:270.8px;width:12.5px;height:1px;background:repeating-linear-gradient(90deg,#a8a8a8 0 1px,transparent 1px 2px)"></div>
<svg class="a" style="left:57.0px;top:263.8px" width="12" height="14" viewBox="0 0 12 14"><path d="M1 0.7 H7.5 L10.8 4 V13.3 H1 Z" fill="#fff" stroke="#8a8a8a" stroke-width="1.2"/><path d="M3 6 H8.5 M3 8.3 H8.5 M3 10.6 H8.5" stroke="#5a8fc0" stroke-width="1"/></svg>
<div class="t" style="left:73.3px;top:264.60px;font-size:12px;letter-spacing:0.45px;color:#262626;">proguard-rules.pro</div>
<div class="a" style="left:29.5px;top:285.8px;width:8.0px;height:1px;background:repeating-linear-gradient(90deg,#a8a8a8 0 1px,transparent 1px 2px)"></div>
<svg class="a" style="left:21.0px;top:281.29px" width="9" height="9" viewBox="0 0 9 9"><rect x="0.5" y="0.5" width="8" height="8" fill="#ececf0" stroke="#b4b4bc" stroke-width="1"/><path d="M2.5 4.5 H6.5" stroke="#56566a" stroke-width="1"/><path d="M4.5 2.5 V6.5" stroke="#56566a" stroke-width="1"/></svg>
<svg class="a" style="left:38.5px;top:279.79px" width="14" height="12" viewBox="0 0 14 12"><path d="M0.5 0.5 H5.5 L6.5 2 H0.5 Z" fill="#b79c6b"/><rect x="0.9" y="2.6" width="12.2" height="8.6" fill="#fdfbf6" stroke="#b79c6b" stroke-width="1.5"/></svg>
<div class="t" style="left:55px;top:279.59px;font-size:12px;letter-spacing:0.45px;color:#262626;">build</div>
<div class="a" style="left:29.5px;top:300.8px;width:8.0px;height:1px;background:repeating-linear-gradient(90deg,#a8a8a8 0 1px,transparent 1px 2px)"></div>
<svg class="a" style="left:21.0px;top:296.28px" width="9" height="9" viewBox="0 0 9 9"><rect x="0.5" y="0.5" width="8" height="8" fill="#ececf0" stroke="#b4b4bc" stroke-width="1"/><path d="M2.5 4.5 H6.5" stroke="#56566a" stroke-width="1"/><path d="M4.5 2.5 V6.5" stroke="#56566a" stroke-width="1"/></svg>
<svg class="a" style="left:38.5px;top:294.78px" width="14" height="12" viewBox="0 0 14 12"><path d="M0.5 0.5 H5.5 L6.5 2 H0.5 Z" fill="#b79c6b"/><rect x="0.9" y="2.6" width="12.2" height="8.6" fill="#fdfbf6" stroke="#b79c6b" stroke-width="1.5"/></svg>
<div class="t" style="left:55px;top:294.58px;font-size:12px;letter-spacing:0.45px;color:#262626;">gradle</div>
<div class="a" style="left:29.5px;top:315.8px;width:8.0px;height:1px;background:repeating-linear-gradient(90deg,#a8a8a8 0 1px,transparent 1px 2px)"></div>
<svg class="a" style="left:21.0px;top:311.27px" width="9" height="9" viewBox="0 0 9 9"><rect x="0.5" y="0.5" width="8" height="8" fill="#ececf0" stroke="#b4b4bc" stroke-width="1"/><path d="M2.5 4.5 H6.5" stroke="#56566a" stroke-width="1"/></svg>
<svg class="a" style="left:38.5px;top:309.77px" width="14" height="12" viewBox="0 0 14 12"><path d="M0.5 0.5 H5.5 L6.5 2 H0.5 Z" fill="#b79c6b"/><rect x="0.9" y="2.6" width="12.2" height="8.6" fill="#fdfbf6" stroke="#b79c6b" stroke-width="1.5"/><rect x="6.5" y="5" width="2" height="7" fill="#c9564a"/><rect x="9" y="4" width="2" height="8" fill="#4a9ad6"/><rect x="11.5" y="6" width="2" height="6" fill="#c9564a"/></svg>
<div class="t" style="left:55px;top:309.57px;font-size:12px;letter-spacing:0.45px;color:#262626;font-weight:bold;letter-spacing:0.3px;">libstreaming</div>
<div class="a" style="left:47.5px;top:330.8px;width:8.0px;height:1px;background:repeating-linear-gradient(90deg,#a8a8a8 0 1px,transparent 1px 2px)"></div>
<svg class="a" style="left:39.0px;top:326.26px" width="9" height="9" viewBox="0 0 9 9"><rect x="0.5" y="0.5" width="8" height="8" fill="#ececf0" stroke="#b4b4bc" stroke-width="1"/><path d="M2.5 4.5 H6.5" stroke="#56566a" stroke-width="1"/><path d="M4.5 2.5 V6.5" stroke="#56566a" stroke-width="1"/></svg>
<svg class="a" style="left:56.5px;top:324.76px" width="14" height="12" viewBox="0 0 14 12"><path d="M0.5 0.5 H5.5 L6.5 2 H0.5 Z" fill="#b79c6b"/><rect x="0.9" y="2.6" width="12.2" height="8.6" fill="#fdfbf6" stroke="#b79c6b" stroke-width="1.5"/></svg>
<div class="t" style="left:73.3px;top:324.56px;font-size:12px;letter-spacing:0.45px;color:#262626;">build</div>
<div class="a" style="left:47.5px;top:345.8px;width:8.0px;height:1px;background:repeating-linear-gradient(90deg,#a8a8a8 0 1px,transparent 1px 2px)"></div>
<svg class="a" style="left:39.0px;top:341.25px" width="9" height="9" viewBox="0 0 9 9"><rect x="0.5" y="0.5" width="8" height="8" fill="#ececf0" stroke="#b4b4bc" stroke-width="1"/><path d="M2.5 4.5 H6.5" stroke="#56566a" stroke-width="1"/><path d="M4.5 2.5 V6.5" stroke="#56566a" stroke-width="1"/></svg>
<svg class="a" style="left:56.5px;top:339.75px" width="14" height="12" viewBox="0 0 14 12"><path d="M0.5 0.5 H5.5 L6.5 2 H0.5 Z" fill="#b79c6b"/><rect x="0.9" y="2.6" width="12.2" height="8.6" fill="#fdfbf6" stroke="#b79c6b" stroke-width="1.5"/></svg>
<div class="t" style="left:73.3px;top:339.55px;font-size:12px;letter-spacing:0.45px;color:#262626;">src</div>
<div class="a" style="left:43.0px;top:360.7px;width:12.5px;height:1px;background:repeating-linear-gradient(90deg,#a8a8a8 0 1px,transparent 1px 2px)"></div>
<svg class="a" style="left:56.5px;top:353.74px" width="14" height="14" viewBox="0 0 14 14"><path d="M12 8.5 A5.2 5.2 0 1 1 10.5 3" fill="none" stroke="#9fcf9a" stroke-width="2.3"/><path d="M6 1.9 A5.2 5.2 0 0 1 12.1 5.8" fill="none" stroke="#2f7d50" stroke-width="2"/><circle cx="7" cy="7" r="2.3" fill="#2a7a48"/></svg>
<div class="t" style="left:73.3px;top:354.54px;font-size:12px;letter-spacing:0.45px;color:#262626;">build.gradle</div>
<div class="a" style="left:43.0px;top:375.7px;width:12.5px;height:1px;background:repeating-linear-gradient(90deg,#a8a8a8 0 1px,transparent 1px 2px)"></div>
<svg class="a" style="left:56.5px;top:369.23px" width="13" height="13" viewBox="0 0 13 13"><path d="M2.5 0.5 H7.8 V8.5 A3 3 0 0 1 4.8 11.8 H1.5 V9.3 H4.5 A0.9 0.9 0 0 0 5.4 8.4 V3 H2.5 Z" fill="#3d7eb0"/><rect x="9.3" y="0.5" width="2.6" height="11.3" fill="#3d7eb0"/><circle cx="2.2" cy="6.2" r="1.7" fill="#d8902e"/></svg>
<div class="t" style="left:73.3px;top:369.53px;font-size:12px;letter-spacing:0.45px;color:#262626;">libstreaming.iml</div>
<div class="a" style="left:25.0px;top:390.7px;width:12.5px;height:1px;background:repeating-linear-gradient(90deg,#a8a8a8 0 1px,transparent 1px 2px)"></div>
<svg class="a" style="left:39.0px;top:383.72px" width="12" height="14" viewBox="0 0 12 14"><path d="M1 0.7 H7.5 L10.8 4 V13.3 H1 Z" fill="#fff" stroke="#8a8a8a" stroke-width="1.2"/><path d="M3 6 H8.5 M3 8.3 H8.5 M3 10.6 H8.5" stroke="#5a8fc0" stroke-width="1"/></svg>
<div class="t" style="left:55px;top:384.52px;font-size:12px;letter-spacing:0.45px;color:#262626;">.gitignore</div>
<div class="a" style="left:25.0px;top:405.7px;width:12.5px;height:1px;background:repeating-linear-gradient(90deg,#a8a8a8 0 1px,transparent 1px 2px)"></div>
<svg class="a" style="left:38.5px;top:398.71000000000004px" width="14" height="14" viewBox="0 0 14 14"><path d="M12 8.5 A5.2 5.2 0 1 1 10.5 3" fill="none" stroke="#9fcf9a" stroke-width="2.3"/><path d="M6 1.9 A5.2 5.2 0 0 1 12.1 5.8" fill="none" stroke="#2f7d50" stroke-width="2"/><circle cx="7" cy="7" r="2.3" fill="#2a7a48"/></svg>
<div class="t" style="left:55px;top:399.51px;font-size:12px;letter-spacing:0.45px;color:#262626;">build.gradle</div>
<div class="a" style="left:25.0px;top:420.7px;width:12.5px;height:1px;background:repeating-linear-gradient(90deg,#a8a8a8 0 1px,transparent 1px 2px)"></div>
<svg class="a" style="left:39.0px;top:413.70000000000005px" width="13" height="14" viewBox="0 0 13 14"><path d="M1 0.7 H7.5 L10.8 4 V13.3 H1 Z" fill="#fff" stroke="#8a8a8a" stroke-width="1.2"/><rect x="4" y="8" width="2" height="5.5" fill="#e05a3a"/><rect x="6.5" y="6" width="2" height="7.5" fill="#f0a030"/><rect x="9" y="7" width="2.5" height="6.5" fill="#5cb85c"/></svg>
<div class="t" style="left:55px;top:414.50px;font-size:12px;letter-spacing:0.45px;color:#262626;">gradle.properties</div>
<div class="a" style="left:25.0px;top:435.7px;width:12.5px;height:1px;background:repeating-linear-gradient(90deg,#a8a8a8 0 1px,transparent 1px 2px)"></div>
<svg class="a" style="left:39.0px;top:428.69000000000005px" width="12" height="14" viewBox="0 0 12 14"><path d="M1 0.7 H7.5 L10.8 4 V13.3 H1 Z" fill="#fff" stroke="#8a8a8a" stroke-width="1.2"/><path d="M3 6 H8.5 M3 8.3 H8.5 M3 10.6 H8.5" stroke="#5a8fc0" stroke-width="1"/></svg>
<div class="t" style="left:55px;top:429.49px;font-size:12px;letter-spacing:0.45px;color:#262626;">gradlew</div>
<div class="a" style="left:25.0px;top:450.7px;width:12.5px;height:1px;background:repeating-linear-gradient(90deg,#a8a8a8 0 1px,transparent 1px 2px)"></div>
<svg class="a" style="left:39.0px;top:443.68000000000006px" width="12" height="14" viewBox="0 0 12 14"><path d="M1 0.7 H7.5 L10.8 4 V13.3 H1 Z" fill="#fff" stroke="#8a8a8a" stroke-width="1.2"/><path d="M3 6 H8.5 M3 8.3 H8.5 M3 10.6 H8.5" stroke="#5a8fc0" stroke-width="1"/></svg>
<div class="t" style="left:55px;top:444.48px;font-size:12px;letter-spacing:0.45px;color:#262626;">gradlew.bat</div>
<div class="a" style="left:25.0px;top:465.7px;width:12.5px;height:1px;background:repeating-linear-gradient(90deg,#a8a8a8 0 1px,transparent 1px 2px)"></div>
<svg class="a" style="left:39.0px;top:458.66999999999996px" width="12" height="14" viewBox="0 0 12 14"><path d="M1 0.7 H7.5 L10.8 4 V13.3 H1 Z" fill="#fff" stroke="#8a8a8a" stroke-width="1.2"/><path d="M3 6 H8.5 M3 8.3 H8.5 M3 10.6 H8.5" stroke="#5a8fc0" stroke-width="1"/></svg>
<div class="t" style="left:55px;top:459.47px;font-size:12px;letter-spacing:0.45px;color:#262626;">import-summary.txt</div>
<div class="a" style="left:25.0px;top:480.7px;width:12.5px;height:1px;background:repeating-linear-gradient(90deg,#a8a8a8 0 1px,transparent 1px 2px)"></div>
<svg class="a" style="left:39.0px;top:473.65999999999997px" width="13" height="14" viewBox="0 0 13 14"><path d="M1 0.7 H7.5 L10.8 4 V13.3 H1 Z" fill="#fff" stroke="#8a8a8a" stroke-width="1.2"/><rect x="4" y="8" width="2" height="5.5" fill="#e05a3a"/><rect x="6.5" y="6" width="2" height="7.5" fill="#f0a030"/><rect x="9" y="7" width="2.5" height="6.5" fill="#5cb85c"/></svg>
<div class="t" style="left:55px;top:474.46px;font-size:12px;letter-spacing:0.45px;color:#262626;">local.properties</div>
<div class="a" style="left:25.0px;top:495.6px;width:12.5px;height:1px;background:repeating-linear-gradient(90deg,#a8a8a8 0 1px,transparent 1px 2px)"></div>
<svg class="a" style="left:38.5px;top:488.65px" width="14" height="14" viewBox="0 0 14 14"><path d="M12 8.5 A5.2 5.2 0 1 1 10.5 3" fill="none" stroke="#9fcf9a" stroke-width="2.3"/><path d="M6 1.9 A5.2 5.2 0 0 1 12.1 5.8" fill="none" stroke="#2f7d50" stroke-width="2"/><circle cx="7" cy="7" r="2.3" fill="#2a7a48"/></svg>
<div class="t" style="left:55px;top:489.45px;font-size:12px;letter-spacing:0.45px;color:#262626;">settings.gradle</div>
<div class="a" style="left:25.0px;top:510.6px;width:12.5px;height:1px;background:repeating-linear-gradient(90deg,#a8a8a8 0 1px,transparent 1px 2px)"></div>
<svg class="a" style="left:38.5px;top:504.14px" width="13" height="13" viewBox="0 0 13 13"><path d="M2.5 0.5 H7.8 V8.5 A3 3 0 0 1 4.8 11.8 H1.5 V9.3 H4.5 A0.9 0.9 0 0 0 5.4 8.4 V3 H2.5 Z" fill="#3d7eb0"/><rect x="9.3" y="0.5" width="2.6" height="11.3" fill="#3d7eb0"/><circle cx="2.2" cy="6.2" r="1.7" fill="#d8902e"/></svg>
<div class="t" style="left:55px;top:504.44px;font-size:12px;letter-spacing:0.45px;color:#262626;">TraceFinalApp Updated Version.iml</div>
<div class="a" style="left:25.0px;top:525.6px;width:12.5px;height:1px;background:repeating-linear-gradient(90deg,#a8a8a8 0 1px,transparent 1px 2px)"></div>
<svg class="a" style="left:38.5px;top:519.13px" width="13" height="13" viewBox="0 0 13 13"><path d="M2.5 0.5 H7.8 V8.5 A3 3 0 0 1 4.8 11.8 H1.5 V9.3 H4.5 A0.9 0.9 0 0 0 5.4 8.4 V3 H2.5 Z" fill="#3d7eb0"/><rect x="9.3" y="0.5" width="2.6" height="11.3" fill="#3d7eb0"/><circle cx="2.2" cy="6.2" r="1.7" fill="#d8902e"/></svg>
<div class="t" style="left:55px;top:519.43px;font-size:12px;letter-spacing:0.45px;color:#262626;">TraceFinalApp.iml</div>
<div class="a" style="left:12.5px;top:540.6px;width:7.5px;height:1px;background:repeating-linear-gradient(90deg,#a8a8a8 0 1px,transparent 1px 2px)"></div>
<svg class="a" style="left:4.0px;top:536.12px" width="9" height="9" viewBox="0 0 9 9"><rect x="0.5" y="0.5" width="8" height="8" fill="#ececf0" stroke="#b4b4bc" stroke-width="1"/><path d="M2.5 4.5 H6.5" stroke="#56566a" stroke-width="1"/><path d="M4.5 2.5 V6.5" stroke="#56566a" stroke-width="1"/></svg>
<svg class="a" style="left:21px;top:534.12px" width="14" height="13" viewBox="0 0 14 13"><rect x="0.5" y="3" width="3" height="10" fill="#c9564a"/><rect x="4" y="1" width="3" height="12" fill="#8aaed0"/><rect x="7.5" y="4" width="3" height="9" fill="#c9564a"/><rect x="11" y="2" width="2.5" height="11" fill="#8aaed0"/></svg>
<div class="t" style="left:37.3px;top:534.42px;font-size:12px;letter-spacing:0.45px;color:#262626;">External Libraries</div>
<div class="a" style="left:0;top:657px;width:318px;height:15px;background:#f4f4f4;border-top:1px solid #e4e4e4"></div>
<div class="a" style="left:1px;top:660px;width:230px;height:9px;background:linear-gradient(#e8e8e8,#d6d6d6);border:1px solid #c4c4c4;border-radius:2px"></div>
</div></div>
<div id="editor" class="a">
<div class="a" style="left:0;top:412.34px;width:960px;height:15.90px;background:#fcfae6"></div>
<div class="a" style="left:0;top:0;width:52.5px;height:556px;background:#efefef"></div>
<div class="a" style="left:0;top:412.34px;width:52.5px;height:15.90px;background:#f7f5e2"></div>
<div class="a" style="left:52px;top:0;width:1px;height:556px;background:#dadada"></div>
<div class="a" style="left:713px;top:0;width:1px;height:556px;background:#e4e4e4"></div>
<div class="a" style="left:86.43px;top:30.44px;width:1px;height:190.80px;background:#e8e8e8"></div>
<div class="a" style="left:86.43px;top:284.84px;width:1px;height:15.90px;background:#e8e8e8"></div>
<div class="a" style="left:86.43px;top:364.34px;width:1px;height:63.60px;background:#e8e8e8"></div>
<div class="a" style="left:112.79px;top:380.24px;width:1px;height:47.70px;background:#e8e8e8"></div>
<div class="a" style="left:79.84px;top:523.34px;width:1px;height:31.80px;background:#e8e8e8"></div>
<div class="a ln" style="left:0;top:-0.7px;width:24.2px;text-align:right;">40
41
42
43
44
45
46
47
48
49
50
51
52
53
54
55
56
57
58
59
60
61
62
63
64
65
66
67
68
69
70
71
72
73
74</div>
<div class="a code" style="left:57.07px;top:-0.7px;color:#262626">    <span class="an">@Override</span>
    <span class="kw">protected</span> <span class="kw">void</span> onCreate(Bundle savedInstanceState) {
        <span class="kw">super</span>.onCreate(savedInstanceState);
        setContentView(R.layout.<span class="sf">activity_camera</span>);
        <span class="fl">mSurfaceView</span> = (SurfaceView)findViewById(R.id.<span class="sf">mSurfaceView</span>);
        <span class="fl">mSurfaceView</span>.getHolder().addCallback(<span class="kw">this</span>);

        initialize_rtsp();

        Intent ii = getIntent();
        Bundle ib = ii.getExtras();
        <span class="fl">name</span> = (String)ib.get(<span class="st">"name"</span>);
        <span class="fl">number</span> = (String)ib.get(<span class="st">"number"</span>);
        <span class="fl">physical_address</span> = (String) ib.get(<span class="st">"address"</span>);
    }

    <span class="an">@Override</span>
    <span class="kw">protected</span> <span class="kw">void</span> onResume() {
        <span class="kw">super</span>.onResume();
    }

    <span class="kw">public</span> <span class="kw">void</span> initialize_rtsp()
    {
        <span class="fl">mSession</span>= SessionBuilder.getInstance()
                .setContext(<span class="kw">this</span>)
                .setAudioEncoder(SessionBuilder.AUDIO_AAC)
                .setAudioQuality(<span class="kw">new</span> Au)
    }



   <span class="kw">class</span> <span class="gr">ServerConnect</span> <span class="kw">implements</span> Runnable
   {
       Socket <span class="fl">s</span>;
       DataOutputStream <span class="fl">dos</span>;</div>
<svg class="a" style="left:47.5px;top:16.99px" width="10" height="11" viewBox="0 0 10 11"><path d="M0.5 0.5 H9.5 V7 L5 10.5 L0.5 7 Z" fill="#fff" stroke="#c4c4c4" stroke-width="1"/><path d="M3 4.5 H7" stroke="#a0a0a0" stroke-width="1"/></svg>
<svg class="a" style="left:47.5px;top:271.39px" width="10" height="11" viewBox="0 0 10 11"><path d="M0.5 0.5 H9.5 V7 L5 10.5 L0.5 7 Z" fill="#fff" stroke="#c4c4c4" stroke-width="1"/><path d="M3 4.5 H7" stroke="#a0a0a0" stroke-width="1"/></svg>
<svg class="a" style="left:47.5px;top:350.89px" width="10" height="11" viewBox="0 0 10 11"><path d="M0.5 0.5 H9.5 V7 L5 10.5 L0.5 7 Z" fill="#fff" stroke="#c4c4c4" stroke-width="1"/><path d="M3 4.5 H7" stroke="#a0a0a0" stroke-width="1"/></svg>
<svg class="a" style="left:47.5px;top:509.89px" width="10" height="11" viewBox="0 0 10 11"><path d="M0.5 0.5 H9.5 V7 L5 10.5 L0.5 7 Z" fill="#fff" stroke="#c4c4c4" stroke-width="1"/><path d="M3 4.5 H7" stroke="#a0a0a0" stroke-width="1"/></svg>
<svg class="a" style="left:47.5px;top:223.69px" width="10" height="11" viewBox="0 0 10 11"><path d="M0.5 10.5 H9.5 V4 L5 0.5 L0.5 4 Z" fill="#fff" stroke="#c4c4c4" stroke-width="1"/><path d="M3 6.5 H7" stroke="#a0a0a0" stroke-width="1"/></svg>
<svg class="a" style="left:47.5px;top:303.19px" width="10" height="11" viewBox="0 0 10 11"><path d="M0.5 10.5 H9.5 V4 L5 0.5 L0.5 4 Z" fill="#fff" stroke="#c4c4c4" stroke-width="1"/><path d="M3 6.5 H7" stroke="#a0a0a0" stroke-width="1"/></svg>
<svg class="a" style="left:47.5px;top:430.39px" width="10" height="11" viewBox="0 0 10 11"><path d="M0.5 10.5 H9.5 V4 L5 0.5 L0.5 4 Z" fill="#fff" stroke="#c4c4c4" stroke-width="1"/><path d="M3 6.5 H7" stroke="#a0a0a0" stroke-width="1"/></svg>
<svg class="a" style="left:28.5px;top:16.49px" width="12" height="12" viewBox="0 0 12 12"><circle cx="4" cy="7" r="3.6" fill="#5a9fc4"/><circle cx="4" cy="7" r="1.2" fill="#d8ecf6"/><path d="M9.5 11 V3" stroke="#b0b0b0" stroke-width="1.6"/><path d="M7.5 4 L9.5 1 L11.5 4 Z" fill="#d05050"/></svg>
<svg class="a" style="left:28.5px;top:270.89px" width="12" height="12" viewBox="0 0 12 12"><circle cx="4" cy="7" r="3.6" fill="#5a9fc4"/><circle cx="4" cy="7" r="1.2" fill="#d8ecf6"/><path d="M9.5 11 V3" stroke="#b0b0b0" stroke-width="1.6"/><path d="M7.5 4 L9.5 1 L11.5 4 Z" fill="#d05050"/></svg>
</div>
<div id="status" class="a"></div>
<svg class="a" style="left:5px;top:675px" width="14" height="14" viewBox="0 0 14 14"><rect x="0.5" y="0.5" width="13" height="13" fill="#dcdcdc" stroke="#6e6e6e" stroke-width="1"/><rect x="2" y="2" width="3" height="10" fill="#9a9a9a"/><path d="M10.5 1 V13" stroke="#6e6e6e"/></svg>
<div class="t" style="left:25.6px;top:676.50px;font-size:12px;letter-spacing:0.6px;color:#3c3c3c">'setAudioQuality(net.majorkernelpanic.streaming.audio.AudioQuality)' in 'net.majorkernelpanic.streaming.SessionBuilder' cannot be applied to '()'</div>
<div class="a" style="left:921px;top:672px;width:1px;height:19px;background:#d2d2d2"></div>
<div class="a" style="left:969px;top:672px;width:1px;height:19px;background:#d2d2d2"></div>
<div class="a" style="left:1010.5px;top:672px;width:1px;height:19px;background:#d2d2d2"></div>
<div class="a" style="left:1058px;top:672px;width:1px;height:19px;background:#d2d2d2"></div>
<div class="a" style="left:1213px;top:672px;width:1px;height:19px;background:#d2d2d2"></div>
<div class="a" style="left:1236px;top:672px;width:1px;height:19px;background:#d2d2d2"></div>
<div class="t" style="left:927px;top:676.50px;font-size:12px;letter-spacing:0.9px;color:#3c3c3c">66:40</div>
<div class="t" style="left:971px;top:676.50px;font-size:12px;letter-spacing:0.1px;color:#3c3c3c">CRLF</div>
<svg class="a" style="left:1002px;top:677px" width="5" height="10" viewBox="0 0 5 10"><path d="M0 4 L2.5 1 L5 4 Z M0 6 L2.5 9 L5 6 Z" fill="#3c3c3c"/></svg>
<div class="t" style="left:1014.5px;top:676.50px;font-size:12px;letter-spacing:0.1px;color:#3c3c3c">UTF-8</div>
<svg class="a" style="left:1048px;top:677px" width="5" height="10" viewBox="0 0 5 10"><path d="M0 4 L2.5 1 L5 4 Z M0 6 L2.5 9 L5 6 Z" fill="#3c3c3c"/></svg>
<div class="t" style="left:1061px;top:676.50px;font-size:12px;letter-spacing:0.85px;color:#9a9a9a">Context: &lt;no context&gt;</div>
<svg class="a" style="left:1224px;top:676px" width="12" height="11" viewBox="0 0 12 11"><path d="M3 5 V3 A2.5 2.5 0 0 1 8 3" fill="none" stroke="#777" stroke-width="1.2"/><rect x="3" y="5" width="7" height="5.5" fill="none" stroke="#777" stroke-width="1.3"/></svg>
<svg class="a" style="left:1240px;top:675px" width="11" height="13" viewBox="0 0 11 13"><circle cx="5.5" cy="5" r="4.3" fill="none" stroke="#888" stroke-width="1.2"/><path d="M2 5 H9 M3 12.5 L5.5 9 L8 12.5" stroke="#888" stroke-width="1.2" fill="none"/></svg>
<svg class="a" style="left:1262px;top:676px" width="11" height="11" viewBox="0 0 11 11"><path d="M0 0 H11 V7.5 H4 L1.5 10.5 V7.5 H0 Z" fill="#c4c4c4"/></svg>
<div id="task" class="a"></div>
<svg class="a" style="left:9px;top:697px" width="16" height="16" viewBox="0 0 16 16"><path d="M0 2.3 L6.6 1.4 V7.5 H0 Z M7.5 1.3 L16 0 V7.5 H7.5 Z M0 8.5 H6.6 V14.6 L0 13.7 Z M7.5 8.5 H16 V16 L7.5 14.7 Z" fill="#f4f4f4"/></svg>
<svg class="a" style="left:46px;top:697px" width="15" height="16" viewBox="0 0 15 16"><circle cx="6.5" cy="6.5" r="5.8" fill="#f3e3dc" stroke="#b07060" stroke-width="1.3"/><path d="M6.5 2.5 V6.5 L9 9" stroke="#a05040" stroke-width="1.2" fill="none"/><text x="8" y="15.5" font-size="6" fill="#5aa0e0" font-family="Liberation Sans">go</text></svg>
<svg class="a" style="left:80px;top:698px" width="17" height="14" viewBox="0 0 17 14"><path d="M0.5 1 H6 L7.5 2.5 H16.5 V13.5 H0.5 Z" fill="#f1cf6b"/><rect x="0.5" y="4" width="16" height="9.5" fill="#f8dd85"/><path d="M5 13.5 V9 H12 V13.5" stroke="#2b8ed6" stroke-width="2.2" fill="none"/></svg>
<div class="a" style="left:75px;top:717px;width:26px;height:2px;background:#a8d8c0"></div>
<svg class="a" style="left:116px;top:697px" width="14" height="14" viewBox="0 0 14 14"><circle cx="7" cy="7" r="6.8" fill="#db4437"/><path d="M7 7 L13.8 7 A6.8 6.8 0 0 1 3.6 12.9 Z" fill="#f4c20d"/><path d="M7 7 L3.6 12.9 A6.8 6.8 0 0 1 1.1 3.6 Z" fill="#0f9d58"/><circle cx="7" cy="7" r="3.2" fill="#fff"/><circle cx="7" cy="7" r="2.4" fill="#4285f4"/></svg>
<div class="a" style="left:140px;top:691px;width:34px;height:29px;background:#2a8456"></div>
<div class="a" style="left:140px;top:717px;width:34px;height:2px;background:#8fe8c0"></div>
<svg class="a" style="left:150px;top:697px" width="15" height="16" viewBox="0 0 15 16"><circle cx="7.5" cy="7" r="6.5" fill="#8fb84a" opacity=".9"/><path d="M2.5 15.5 L7.5 4 L12.5 15.5 M4 11 H11" stroke="#e8f4e8" stroke-width="1.5" fill="none"/><circle cx="7.5" cy="4" r="1.4" fill="#555"/></svg>
<div class="a" style="left:1273px;top:691px;width:1px;height:29px;background:#3d5a4a"></div>
<svg class="a" style="left:1087px;top:701px" width="12" height="7" viewBox="0 0 12 7"><path d="M0.5 6.5 L6 1 L11.5 6.5" stroke="#e0e0e0" stroke-width="1.3" fill="none"/></svg>
<svg class="a" style="left:1108px;top:699px" width="16" height="12" viewBox="0 0 16 12"><rect x="3" y="3.5" width="11.5" height="7" fill="none" stroke="#e8e8e8" stroke-width="1.2"/><rect x="5" y="5.5" width="5" height="3" fill="#e8e8e8"/><rect x="14.5" y="5.5" width="1.5" height="3" fill="#e8e8e8"/><path d="M1 0.5 V3 M4 0.5 V3 M0 3 H5" stroke="#e8e8e8" stroke-width="1"/></svg>
<svg class="a" style="left:1130px;top:698px" width="16" height="14" viewBox="0 0 16 14"><path d="M6 13 A7 7 0 0 1 13 6 M8 13 A5 5 0 0 1 13 8 M10.5 13 A2.5 2.5 0 0 1 13 10.5 M3.5 13 A9.5 9.5 0 0 1 13 3.5" stroke="#d8d8d8" stroke-width="1.2" fill="none"/><path d="M0 13.5 L3.5 7 L7 13.5 Z" fill="#f0c030"/><path d="M3.5 9.5 V11.5" stroke="#222" stroke-width="1"/></svg>
<svg class="a" style="left:1152px;top:698px" width="17" height="14" viewBox="0 0 17 14"><path d="M1 4.5 H4 L8 1 V13 L4 9.5 H1 Z" fill="none" stroke="#e8e8e8" stroke-width="1.2"/><path d="M10 4.5 A3 3 0 0 1 10 9.5 M12 2.5 A6 6 0 0 1 12 11.5 M14 0.7 A8.5 8.5 0 0 1 14 13.3" stroke="#e8e8e8" stroke-width="1.1" fill="none"/></svg>
<div class="t" style="left:1180px;top:699.50px;font-size:11.5px;color:#eaeaea">3:50 PM</div>
<svg class="a" style="left:1239px;top:697px" width="17" height="16" viewBox="0 0 17 16"><path d="M0.5 0.5 H16.5 V12 H10 L8.5 15.5 L7 12 H0.5 Z" fill="#f4f4f4"/><path d="M3 4 H14 M3 6.5 H14 M3 9 H11" stroke="#333" stroke-width="1"/></svg>
<svg class="a" style="left:587.9px;top:539.9px" width="58" height="3" viewBox="0 0 58 3"><polyline points="0,2.5 2,0.5 4,2.5 6,0.5 8,2.5 10,0.5 12,2.5 14,0.5 16,2.5 18,0.5 20,2.5 22,0.5 24,2.5 26,0.5 28,2.5 30,0.5 32,2.5 34,0.5 36,2.5 38,0.5 40,2.5 42,0.5 44,2.5 46,0.5 48,2.5 50,0.5 52,2.5 54,0.5 56,2.5 58,0.5" fill="none" stroke="#e05858" stroke-width="0.9"/></svg>
<div class="a" style="left:634px;top:528.9px;width:2px;height:13px;background:#000"></div>
<div class="a" style="left:589px;top:406px;width:469px;height:121.5px;background:#e9f0f7;border:1px solid #9a9a9a;overflow:hidden">
<div class="a" style="left:0;top:0;width:456px;height:18.05px;background:#a2b5c1"></div>
<svg class="a" style="left:3px;top:2.875px" width="12" height="12" viewBox="0 0 12 12"><circle cx="6" cy="6" r="5.5" fill="#a8d2ee" stroke="#86b9de" stroke-width=".6"/><text x="2.6" y="9.5" font-size="9" fill="#3a6f98" font-family="Liberation Sans">C</text></svg>
<svg class="a" style="left:18px;top:3.875px" width="9" height="10" viewBox="0 0 9 10"><rect x="1" y="3" width="7" height="6" fill="#8fb38f"/></svg>
<div class="a code" style="left:32.7px;top:1.00px;line-height:17.75px;color:#303030;"><span class="hl">Au</span>dioQuality<span style="color:#404040"> (net.majorkernelpanic.streaming.audio)</span></div>
<svg class="a" style="left:3px;top:20.625px" width="12" height="12" viewBox="0 0 12 12"><circle cx="6" cy="6" r="5.5" fill="#a9d9a9" stroke="#8cc58c" stroke-width=".6"/><text x="3.2" y="9.3" font-size="8.5" fill="#3b7a3b" font-family="Liberation Mono">I</text></svg>
<svg class="a" style="left:18px;top:21.625px" width="9" height="10" viewBox="0 0 9 10"><path d="M2 4 V2.5 A2.5 2.5 0 0 1 7 2.5" fill="none" stroke="#9cc09c" stroke-width="1.1"/><rect x="2" y="4.5" width="6" height="5" fill="none" stroke="#9cc09c" stroke-width="1.2"/></svg>
<div class="a code" style="left:32.7px;top:18.75px;line-height:17.75px;color:#404040;"><span class="hl">Au</span>toCloseable<span style="color:#b4b4b4"> (java.lang)</span></div>
<svg class="a" style="left:3px;top:38.375px" width="12" height="12" viewBox="0 0 12 12"><circle cx="6" cy="6" r="5.5" fill="#a9d9a9" stroke="#8cc58c" stroke-width=".6"/><text x="3.2" y="9.3" font-size="8.5" fill="#3b7a3b" font-family="Liberation Mono">I</text><circle cx="1.8" cy="10" r="1.6" fill="none" stroke="#6a6a6a" stroke-width=".9"/></svg>
<svg class="a" style="left:18px;top:39.375px" width="9" height="10" viewBox="0 0 9 10"><path d="M2 4 V2.5 A2.5 2.5 0 0 1 7 2.5" fill="none" stroke="#9cc09c" stroke-width="1.1"/><rect x="2" y="4.5" width="6" height="5" fill="none" stroke="#9cc09c" stroke-width="1.2"/></svg>
<div class="a code" style="left:32.7px;top:36.50px;line-height:17.75px;color:#404040;"><span style="text-decoration:line-through;text-decoration-color:#404040">Camera.<span class="hl">Au</span>toFocusCallback</span> <span style="color:#b4b4b4;text-decoration:line-through;text-decoration-color:#b4b4b4">(android.hardware.Camera)</span></div>
<svg class="a" style="left:3px;top:56.125px" width="12" height="12" viewBox="0 0 12 12"><circle cx="6" cy="6" r="5.5" fill="#a9d9a9" stroke="#8cc58c" stroke-width=".6"/><text x="3.2" y="9.3" font-size="8.5" fill="#3b7a3b" font-family="Liberation Mono">I</text><circle cx="1.8" cy="10" r="1.6" fill="none" stroke="#6a6a6a" stroke-width=".9"/></svg>
<svg class="a" style="left:18px;top:57.125px" width="9" height="10" viewBox="0 0 9 10"><path d="M2 4 V2.5 A2.5 2.5 0 0 1 7 2.5" fill="none" stroke="#9cc09c" stroke-width="1.1"/><rect x="2" y="4.5" width="6" height="5" fill="none" stroke="#9cc09c" stroke-width="1.2"/></svg>
<div class="a code" style="left:32.7px;top:54.25px;line-height:17.75px;color:#404040;"><span style="text-decoration:line-through;text-decoration-color:#404040">Camera.<span class="hl">Au</span>toFocusMoveCallback</span> <span style="color:#b4b4b4;text-decoration:line-through;text-decoration-color:#b4b4b4">(android.hardware.Camera)</span></div>
<svg class="a" style="left:3px;top:73.875px" width="12" height="12" viewBox="0 0 12 12"><circle cx="6" cy="6" r="5.5" fill="#a8d2ee" stroke="#86b9de" stroke-width=".6"/><text x="2.6" y="9.5" font-size="9" fill="#3a6f98" font-family="Liberation Sans">C</text></svg>
<svg class="a" style="left:18px;top:74.875px" width="9" height="10" viewBox="0 0 9 10"><path d="M2 4 V2.5 A2.5 2.5 0 0 1 7 2.5" fill="none" stroke="#9cc09c" stroke-width="1.1"/><rect x="2" y="4.5" width="6" height="5" fill="none" stroke="#9cc09c" stroke-width="1.2"/></svg>
<div class="a code" style="left:32.7px;top:72.00px;line-height:17.75px;color:#404040;">Def<span class="hl">au</span>ltActivity<span style="color:#b4b4b4"> (comsats.tracefinalapp)</span></div>
<svg class="a" style="left:3px;top:91.625px" width="12" height="12" viewBox="0 0 12 12"><circle cx="6" cy="6" r="5.5" fill="#a9d9a9" stroke="#8cc58c" stroke-width=".6"/><text x="3.2" y="9.3" font-size="8.5" fill="#3b7a3b" font-family="Liberation Mono">I</text><circle cx="1.8" cy="10" r="1.6" fill="none" stroke="#6a6a6a" stroke-width=".9"/></svg>
<svg class="a" style="left:18px;top:92.625px" width="9" height="10" viewBox="0 0 9 10"><path d="M2 4 V2.5 A2.5 2.5 0 0 1 7 2.5" fill="none" stroke="#9cc09c" stroke-width="1.1"/><rect x="2" y="4.5" width="6" height="5" fill="none" stroke="#9cc09c" stroke-width="1.2"/></svg>
<div class="a code" style="left:32.7px;top:89.75px;line-height:17.75px;color:#404040;">Thread.Unc<span class="hl">au</span>ghtExceptionHandler<span style="color:#b4b4b4"> (java.lang.Thread)</span></div>
<div class="a" style="left:456px;top:0;width:13px;height:106.5px;background:#eeeeee;border-left:1px solid #dcdcdc"></div>
<div class="a" style="left:0;top:106.50px;width:469px;height:15px;background:#f2f1f2"></div>
<div class="t" style="left:1.5px;top:108.40px;font-size:9.6px;letter-spacing:0.93px;color:#2a2a2a">Press Ctrl+Shift+Space to show only variants that are suitable by type</div>
<div class="a" style="left:455.5px;top:106.50px;width:1px;height:15px;background:#cfcfcf"></div>
<svg class="a" style="left:457.5px;top:109.5px" width="9" height="9" viewBox="0 0 9 9"><path d="M0.5 1.8 Q1 0.8 2.5 0.8 H8.5" stroke="#2f7f98" stroke-width="1.5" fill="none"/><path d="M3 1 Q3 5 1.5 8" stroke="#2f7f98" stroke-width="1.4" fill="none"/><path d="M6 1 V6.5 Q6 8 7.5 8" stroke="#2f7f98" stroke-width="1.4" fill="none"/></svg>
<div class="a" style="left:455.5px;top:106.5px;width:13px;height:1px;background:#d0d0d0"></div>
</div>
<div class="a" style="left:525px;top:553px;width:138px;height:24.5px;background:#fdfde4;border:1px solid #b4b48a;border-radius:3px"></div>
<svg class="a" style="left:587.5px;top:543px" width="14" height="11" viewBox="0 0 14 11"><path d="M0 10.8 L7 1 L14 10.8" fill="#fdfde4" stroke="#b4b48a" stroke-width="1"/></svg>
<div class="t" style="left:532px;top:559.00px;font-size:12px;font-weight:bold;letter-spacing:0.4px;color:#111">AudioQuality quality</div>
<div class="a" style="left:1271px;top:245px;width:7px;height:100px;background:#c8c8c8;border-radius:3px"></div>
<svg class="a" style="left:1268px;top:120px" width="6" height="8" viewBox="0 0 6 8"><path d="M1 0 V8 M5 0 V8" stroke="#9a9a9a" stroke-width="1.3"/></svg>
<div class="a" style="left:1265.5px;top:140.35px;width:13px;height:1.6px;background:#e6d23a"></div>
<div class="a" style="left:1265.5px;top:143.65px;width:13px;height:1.6px;background:#e6d23a"></div>
<div class="a" style="left:1265.5px;top:146.85px;width:13px;height:1.6px;background:#e6d23a"></div>
<div class="a" style="left:1265.5px;top:149.45px;width:13px;height:1.6px;background:#e6d23a"></div>
<div class="a" style="left:1265.5px;top:166.15px;width:13px;height:1.6px;background:#e6d23a"></div>
<div class="a" style="left:1265.5px;top:169.25px;width:13px;height:1.6px;background:#e6d23a"></div>
<div class="a" style="left:1265.5px;top:194.85px;width:13px;height:1.6px;background:#e6d23a"></div>
<div class="a" style="left:1265.5px;top:203.65px;width:13px;height:1.6px;background:#e6d23a"></div>
<div class="a" style="left:1265.5px;top:218.55px;width:13px;height:1.6px;background:#b86a6a"></div>
<div class="a" style="left:1265.5px;top:232.55px;width:13px;height:1.6px;background:#e6d23a"></div>
<div class="a" style="left:1265.5px;top:236.75px;width:13px;height:1.6px;background:#e6d23a"></div>
<div class="a" style="left:1265.5px;top:240.05px;width:13px;height:1.6px;background:#e6d23a"></div>
<div class="a" style="left:1265.5px;top:319.75px;width:13px;height:1.6px;background:#b86a6a"></div>
<div class="a" style="left:1265.5px;top:335.05px;width:13px;height:1.6px;background:#e6d23a"></div>

<div class="a" style="left:319px;top:115.5px;width:961px;height:1px;background:#c4c4c4"></div>
<svg class="a" style="left:576.7px;top:326.6px" width="14" height="22" viewBox="0 0 14 22"><path d="M0.6 0.6 V16.5 L4.4 12.9 L7.2 19.6 L9.7 18.5 L7 12 H12.2 Z" fill="#fff" stroke="#111" stroke-width="1.1" stroke-linejoin="miter"/></svg>
<div class="a" style="left:1277.5px;top:3px;width:2.5px;height:121px;background:#080808"></div>
<div class="a" style="left:1277.5px;top:130px;width:2.5px;height:77px;background:#080808"></div>
<div class="a" style="left:1277.5px;top:250px;width:2.5px;height:135px;background:#080808"></div>
<div class="a" style="left:1277.5px;top:395px;width:2.5px;height:135px;background:#080808"></div>
<div class="a" style="left:1277.5px;top:545px;width:2.5px;height:146px;background:#080808"></div>
</body></html>
